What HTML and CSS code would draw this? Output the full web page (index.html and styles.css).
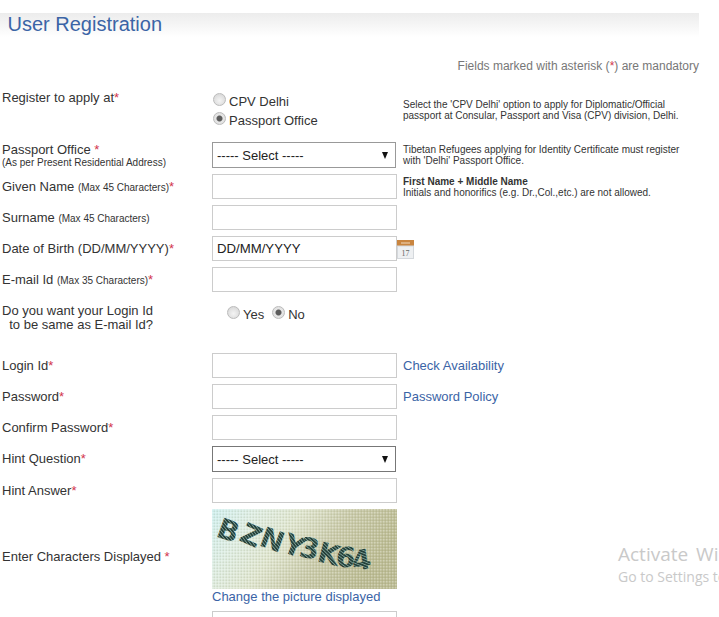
FILE: index.html
```html
<!DOCTYPE html>
<html lang="en">
<head>
<meta charset="utf-8">
<title>User Registration</title>
<link rel="stylesheet" href="styles.css">
</head>
<body>
<div class="page">
  <h1 class="title">User Registration</h1>
  <p class="mandatory">Fields marked with asterisk (<span class="req">*</span>) are mandatory</p>
  <form class="form">
    <div class="label label-top">Register to apply at<span class="req">*</span></div>
    <div class="radios-stack">
      <label class="radio-line"><input class="radio" type="radio" name="at"><span>CPV Delhi</span></label>
      <label class="radio-line"><input class="radio" type="radio" name="at" checked><span>Passport Office</span></label>
    </div>
    <div class="note note-top">Select the 'CPV Delhi' option to apply for Diplomatic/Official<br>passport at Consular, Passport and Visa (CPV) division, Delhi.</div>

    <div class="label label-double">Passport Office <span class="req">*</span><small class="tiny">(As per Present Residential Address)</small></div>
    <div class="select"><span>----- Select -----</span><i class="arrow"></i></div>
    <div class="note">Tibetan Refugees applying for Identity Certificate must register<br>with 'Delhi' Passport Office.</div>

    <div class="label">Given Name <small>(Max 45 Characters)</small><span class="req">*</span></div>
    <div class="input"></div>
    <div class="note"><b>First Name + Middle Name</b><br>Initials and honorifics (e.g. Dr.,Col.,etc.) are not allowed.</div>

    <div class="label">Surname <small>(Max 45 Characters)</small></div>
    <div class="input"></div>
    <div></div>

    <div class="label">Date of Birth (DD/MM/YYYY)<span class="req">*</span></div>
    <div class="input">DD/MM/YYYY</div>
    <div class="cal-cell">
      <svg class="cal" viewBox="0 0 17 19" width="17" height="19" aria-hidden="true">
        <rect x="0" y="0" width="17" height="6" fill="#c9853f"/>
        <rect x="4" y="2.5" width="9" height="1" fill="#f1d9bd"/>
        <rect x="0" y="6" width="17" height="13" fill="#eef0f2"/>
        <rect x="0.5" y="6" width="16" height="12.5" fill="none" stroke="#d4d8dc"/>
        <text x="8.5" y="16" text-anchor="middle" class="cal-num">17</text>
      </svg>
    </div>

    <div class="label">E-mail Id <small>(Max 35 Characters)</small><span class="req">*</span></div>
    <div class="input"></div>
    <div></div>

    <div class="label label-question">Do you want your Login Id<br>&nbsp;&nbsp;to be same as E-mail Id?</div>
    <div class="radios-inline">
      <label class="radio-line"><input class="radio" type="radio" name="same"><span>Yes</span></label>
      <label class="radio-line"><input class="radio" type="radio" name="same" checked><span>No</span></label>
    </div>
    <div></div>

    <div class="label">Login Id<span class="req">*</span></div>
    <div class="input"></div>
    <a class="side-link" href="#">Check Availability</a>

    <div class="label">Password<span class="req">*</span></div>
    <div class="input"></div>
    <a class="side-link" href="#">Password Policy</a>

    <div class="label">Confirm Password<span class="req">*</span></div>
    <div class="input"></div>
    <div></div>

    <div class="label label-hint">Hint Question<span class="req">*</span></div>
    <div class="select select-dark"><span>----- Select -----</span><i class="arrow"></i></div>
    <div></div>

    <div class="label">Hint Answer<span class="req">*</span></div>
    <div class="input"></div>
    <div></div>

    <div class="label label-captcha">Enter Characters Displayed <span class="req">*</span></div>
    <div class="captcha-cell">
      <svg class="captcha" viewBox="0 0 185 80" width="185" height="80" role="img" aria-label="Captcha">
        <defs>
          <linearGradient id="capbg" x1="0" y1="0" x2="1" y2="0.3">
            <stop offset="0" stop-color="#d0f0f0"/>
            <stop offset="0.22" stop-color="#dfeee4"/>
            <stop offset="0.45" stop-color="#e0e6d0"/>
            <stop offset="0.7" stop-color="#cacbab"/>
            <stop offset="1" stop-color="#bcbc94"/>
          </linearGradient>
          <pattern id="weave" width="3" height="3" patternUnits="userSpaceOnUse">
            <rect width="1.5" height="1.5" fill="#ffffff" fill-opacity="0.3"/>
            <rect x="1.5" y="1.5" width="1.5" height="1.5" fill="#6f7040" fill-opacity="0.14"/>
          </pattern>
          <pattern id="ink" width="2.5" height="2.5" patternUnits="userSpaceOnUse" patternTransform="rotate(30)">
            <rect width="2.5" height="2.5" fill="#24403a"/>
            <rect y="1.8" width="2.5" height="0.7" fill="#8fb0a4"/>
          </pattern>
        </defs>
        <rect width="185" height="80" fill="url(#capbg)"/>
        <rect width="185" height="80" fill="url(#weave)"/>
        <g class="cap-text" fill="url(#ink)">
          <text transform="translate(3,27) rotate(20)">B</text>
          <text transform="translate(26,31) rotate(24)">Z</text>
          <text transform="translate(46,36) rotate(20)">N</text>
          <text transform="translate(69,42) rotate(22)">Y</text>
          <text transform="translate(86,47) rotate(12)">3</text>
          <text transform="translate(104,52) rotate(14)">K</text>
          <text transform="translate(123,57) rotate(6)">6</text>
          <text transform="translate(141,62) rotate(-8)">4</text>
        </g>
      </svg>
      <a class="change-link" href="#">Change the picture displayed</a>
    </div>
    <div></div>

    <div></div>
    <div class="input"></div>
    <div></div>
  </form>
  <div class="activate">
    <div class="activate-title">Activate Windows</div>
    <div class="activate-sub">Go to Settings to activate Windows.</div>
  </div>
</div>
</body>
</html>
```
FILE: styles.css
```css
html, body {
  margin: 0;
  padding: 0;
  height: 617px;
  overflow: hidden;
  background: #fff;
}

.page {
  position: relative;
  width: 719px;
  height: 617px;
  overflow: hidden;
  font-family: "Liberation Sans", Arial, sans-serif;
  color: #333;
  padding-top: 13px;
  box-sizing: border-box;
}

.title {
  margin: 0;
  width: 699px;
  height: 24px;
  box-sizing: border-box;
  padding-left: 7.5px;
  font-size: 20px;
  line-height: 23px;
  font-weight: 400;
  color: #3b64a6;
  background: linear-gradient(#ececec, #ffffff);
}

.mandatory {
  margin: 22px 0 0;
  width: 699px;
  text-align: right;
  font-size: 12px;
  line-height: 14px;
  color: #777;
}

.req {
  color: #d2344c;
}

.form {
  display: grid;
  grid-template-columns: 212px 185px 322px;
  row-gap: 6px;
  margin-top: 16px;
}

.label {
  padding-left: 2px;
  font-size: 13px;
  line-height: 15px;
  color: #333;
  display: block;
  align-self: center;
}

.label small {
  font-size: 10px;
}

.label-top {
  align-self: start;
  padding-top: 1px;
}

.label-double {
  height: 26px;
  line-height: 14px;
  padding-top: 1px;
  box-sizing: border-box;
  align-self: start;
}

.label-double .tiny {
  display: block;
  font-size: 10px;
  line-height: 11px;
}

.label-question {
  align-self: start;
  padding-top: 6px;
  line-height: 14px;
}

.label-hint {
  margin-bottom: 1px;
}

.label-captcha {
  margin-bottom: 2px;
}

.radios-stack {
  display: flex;
  flex-direction: column;
  gap: 3px;
  height: 47px;
  padding-top: 4px;
  box-sizing: border-box;
}

.radios-inline {
  display: flex;
  gap: 8px;
  height: 49px;
  padding: 8px 0 0 15px;
  box-sizing: border-box;
}

.radio-line {
  display: flex;
  align-items: center;
  gap: 3px;
  height: 16px;
  font-size: 13px;
  color: #333;
}

.radios-stack .radio {
  margin-left: 1px;
}

.radio {
  appearance: none;
  -webkit-appearance: none;
  width: 13px;
  height: 13px;
  margin: 0;
  border-radius: 50%;
  border: 1px solid #bbb;
  background: radial-gradient(circle at 50% 60%, #f4f4f4 0%, #dcdcdc 70%);
  box-sizing: border-box;
  position: relative;
  top: -2px;
}

.radio:checked {
  background: radial-gradient(circle, #5c5c5c 0, #5c5c5c 2.5px, #e6e6e6 3.5px, #dcdcdc 100%);
}

.note {
  padding-left: 6px;
  font-size: 10px;
  line-height: 11px;
  color: #333;
  align-self: center;
}

.note-top {
  align-self: start;
  padding-top: 10px;
}

.input,
.select {
  box-sizing: border-box;
  width: 185px;
  height: 25px;
  border: 1px solid #ccc;
  background: #fff;
  padding-left: 4px;
  font-size: 13.2px;
  line-height: 23px;
  color: #222;
}

.select {
  display: flex;
  align-items: center;
  justify-content: space-between;
  height: 26px;
  width: 184px;
  border-color: #999;
  padding-right: 7px;
  font-size: 13px;
}

.select-dark {
  border-color: #777;
}

.arrow {
  width: 0;
  height: 0;
  border-left: 3.5px solid transparent;
  border-right: 3.5px solid transparent;
  border-top: 7px solid #111;
}

.cal-cell {
  display: flex;
  align-items: flex-start;
  padding-top: 4px;
}

.cal {
  display: block;
}

.cal-num {
  font-family: "Liberation Serif", serif;
  font-size: 8px;
  fill: #666;
}

.side-link,
.change-link {
  font-size: 13px;
  line-height: 25px;
  color: #3b64a6;
  text-decoration: none;
}

.side-link {
  padding-left: 6px;
}

.captcha-cell {
  display: flex;
  flex-direction: column;
  height: 96px;
}

.captcha {
  display: block;
}

.change-link {
  line-height: 16px;
}

.cap-text {
  font-family: "DejaVu Sans", sans-serif;
  font-weight: 700;
  font-size: 28px;
}

.activate {
  position: absolute;
  left: 618px;
  top: 543px;
  width: 300px;
  font-family: "Open Sans", sans-serif;
  color: #c9c9c9;
  white-space: nowrap;
}

.activate-title {
  font-size: 19px;
  line-height: 22px;
  word-spacing: 3px;
}

.activate-sub {
  font-size: 14px;
  line-height: 24px;
}
```
